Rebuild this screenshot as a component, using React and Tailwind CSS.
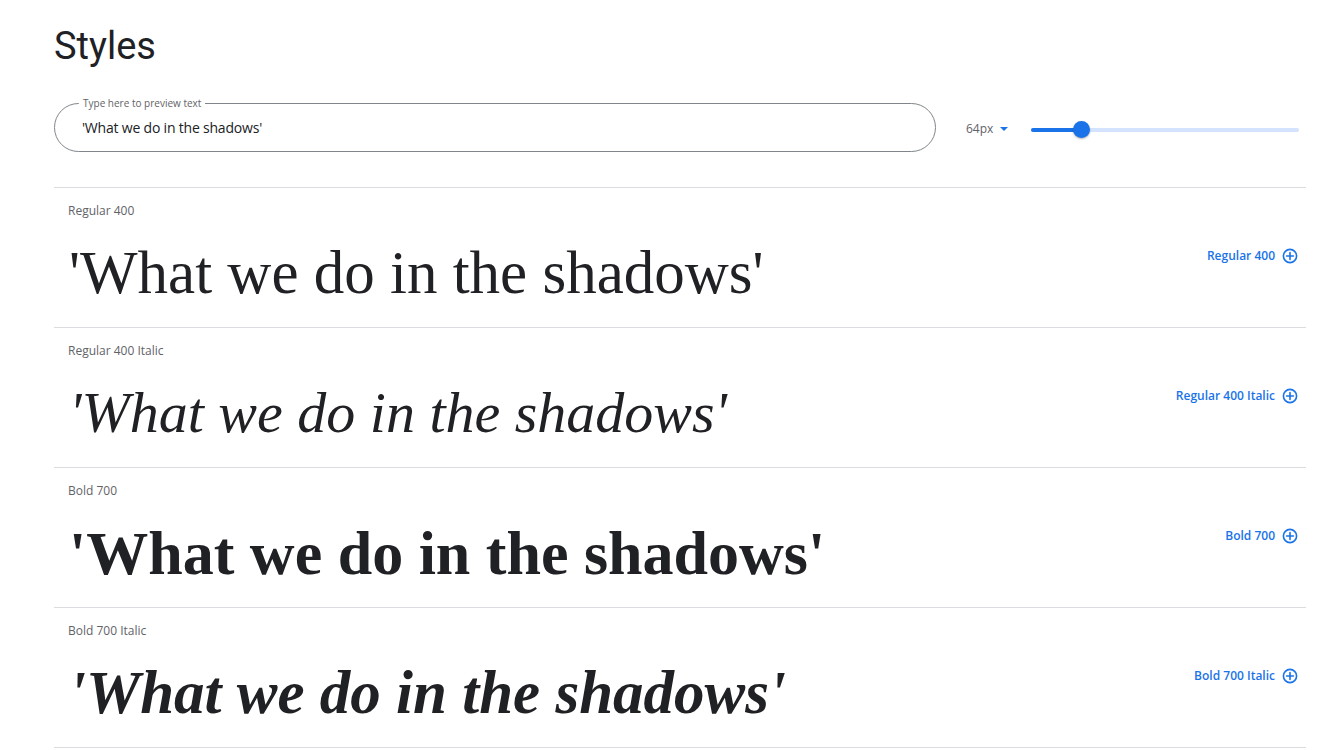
const SAMPLE = "'What we do in the shadows'";

const styles = [
  { label: 'Regular 400', cls: 'font-normal not-italic text-[61px]' },
  { label: 'Regular 400 Italic', cls: 'font-normal italic text-[58px]' },
  { label: 'Bold 700', cls: 'font-bold not-italic text-[62px]' },
  { label: 'Bold 700 Italic', cls: 'font-bold italic text-[61px]' },
];

function PlusCircle() {
  return (
    <svg width="16" height="16" viewBox="0 0 16 16" fill="none" stroke="#1a73e8" strokeWidth="1.6">
      <circle cx="8" cy="8" r="6.6" />
      <path d="M8 4.6v6.8M4.6 8h6.8" strokeLinecap="round" />
    </svg>
  );
}

function StyleRow({ label, cls }) {
  return (
    <div className="border-t border-[#dadce0] h-[140px] flex flex-col">
      <div className="pt-[15px] pl-[14px] text-[12px] leading-4 text-[#5f6368] font-['Open_Sans',sans-serif]">{label}</div>
      <div className="flex items-start justify-between">
        <div className={`pl-[15px] pt-[12px] leading-[84px] text-[#202124] font-['Liberation_Serif',serif] whitespace-nowrap ${cls}`}>
          {SAMPLE}
        </div>
        <button className="mt-[28px] mr-[8px] flex items-center gap-[7px] text-[12px] font-semibold text-[#1a73e8] font-['Open_Sans',sans-serif]">
          <span>{label}</span>
          <PlusCircle />
        </button>
      </div>
    </div>
  );
}

export default function App() {
  const pct = 19;
  return (
    <div className="min-h-screen bg-white font-['Roboto',sans-serif] px-[54px] pr-[26px]">
      <h1 className="pt-[26px] text-[38px] leading-[40px] text-[#202124] font-normal">Styles</h1>
      <div className="mt-[37px] flex items-center">
        <div className="relative w-[882px] h-[49px] rounded-full border border-[#80868b] flex items-center pl-[27px]">
          <span className="absolute -top-[7px] left-[24px] bg-white px-[4px] text-[10px] leading-[12px] text-[#5f6368] font-['Open_Sans',sans-serif]">
            Type here to preview text
          </span>
          <span className="text-[14px] text-[#202124] font-['Open_Sans',sans-serif] tracking-[-0.2px]">{SAMPLE}</span>
        </div>
        <div className="ml-[30px] mt-[2px] flex items-center gap-[6px] text-[12px] text-[#5f6368] font-['Open_Sans',sans-serif]">
          <span>64px</span>
          <svg width="10" height="10" viewBox="0 0 10 10"><path d="M1 3h8L5 7z" fill="#1a73e8" /></svg>
        </div>
        <div className="ml-[22px] mt-[4px] relative w-[268px] h-[20px] flex items-center">
          <div className="w-full h-[4px] rounded-full bg-[#d3e3fd]" />
          <div className="absolute left-0 h-[4px] rounded-full bg-[#1a73e8]" style={{ width: `${pct}%` }} />
          <div className="absolute w-[17px] h-[17px] rounded-full bg-[#1a73e8] shadow-[0_1px_2px_rgba(0,0,0,0.3)]" style={{ left: `calc(${pct}% - 9px)` }} />
        </div>
      </div>
      <div className="mt-[35px] border-b border-[#dadce0]">
        {styles.map((s) => (
          <StyleRow key={s.label} {...s} />
        ))}
      </div>
    </div>
  );
}
